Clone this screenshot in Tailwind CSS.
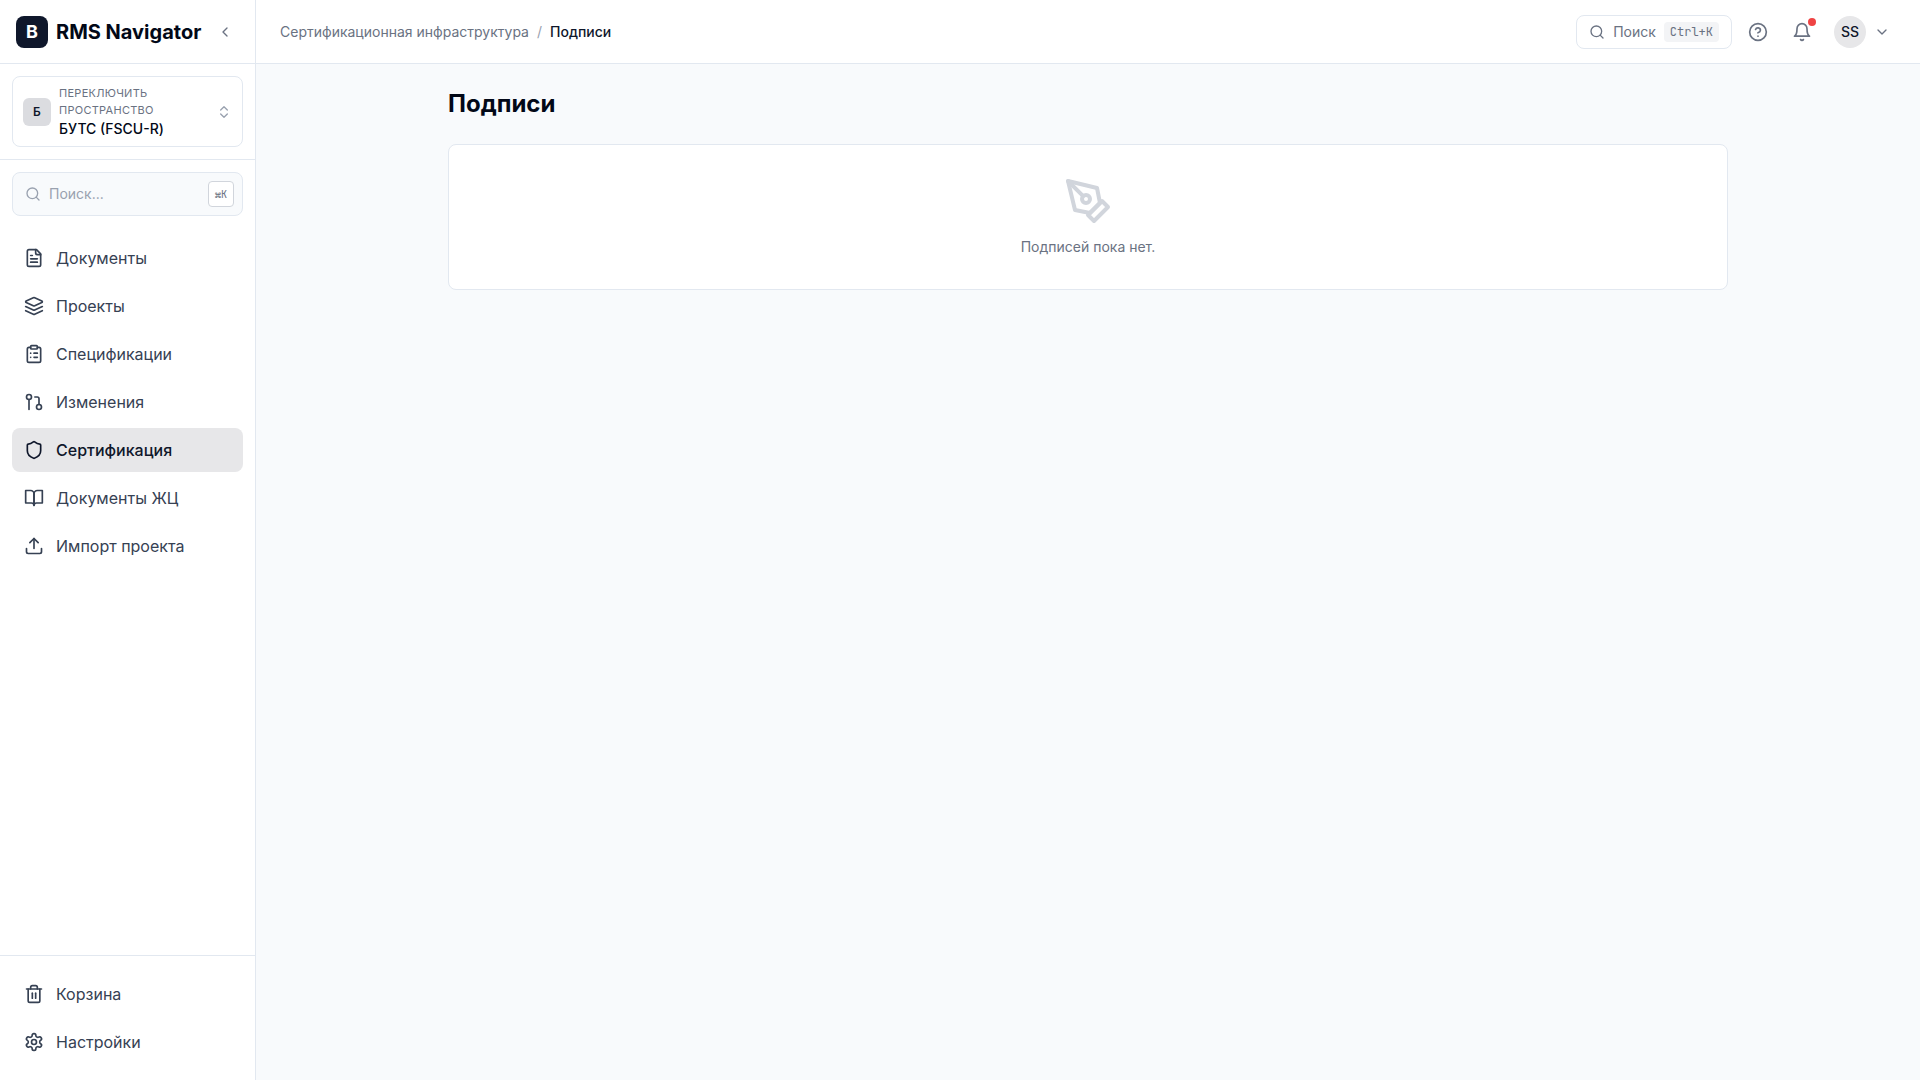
<!DOCTYPE html>
<html lang="ru">
<head>
    <meta charset="UTF-8">
    <meta name="viewport" content="width=device-width, initial-scale=1.0">
    <title>Подписи — RMS Navigator</title>
    <script src="https://cdn.jsdelivr.net/npm/@tailwindcss/browser@4"></script>
</head>
<body class="flex h-screen bg-[#f8fafc] font-['Inter',sans-serif] text-gray-700">

    <!-- Sidebar -->
    <aside class="flex w-64 shrink-0 flex-col border-r border-slate-200 bg-white">
        <div class="flex h-16 shrink-0 items-center justify-between border-b border-slate-200 px-4">
            <a href="#" class="flex items-center gap-2">
                <span class="flex size-8 items-center justify-center rounded-lg bg-slate-900 text-lg font-bold text-white">B</span>
                <span class="text-xl font-bold whitespace-nowrap text-[#020817]">RMS Navigator</span>
            </a>
            <button type="button" aria-label="Свернуть меню" class="rounded-md p-1.5 text-gray-500 hover:bg-gray-100">
                <svg class="size-4" viewBox="0 0 24 24" fill="none" stroke="currentColor" stroke-width="2" stroke-linecap="round" stroke-linejoin="round"><path d="m15 18-6-6 6-6"/></svg>
            </button>
        </div>

        <div class="border-b border-slate-200 p-3">
            <button type="button" class="flex w-full items-center gap-2 rounded-lg border border-slate-200 px-2.5 py-2 text-left hover:bg-gray-50">
                <span class="flex size-7 shrink-0 items-center justify-center rounded-md bg-[#dbdce0] text-xs font-semibold text-slate-900">Б</span>
                <span class="min-w-0 flex-1">
                    <span class="block text-[11px] leading-[17px] tracking-wide text-gray-500 uppercase">Переключить пространство</span>
                    <span class="block truncate text-sm leading-[19px] font-medium text-[#020817]">БУТС (FSCU-R)</span>
                </span>
                <svg class="size-4 shrink-0 text-gray-400" viewBox="0 0 24 24" fill="none" stroke="currentColor" stroke-width="2" stroke-linecap="round" stroke-linejoin="round"><path d="m7 15 5 5 5-5"/><path d="m7 9 5-5 5 5"/></svg>
            </button>
        </div>

        <div class="px-3 pt-3">
            <label class="flex h-11 items-center gap-2 rounded-lg border border-slate-200 bg-[#f8fafc] pr-2 pl-3">
                <svg class="size-4 shrink-0 text-gray-400" viewBox="0 0 24 24" fill="none" stroke="currentColor" stroke-width="2" stroke-linecap="round" stroke-linejoin="round"><circle cx="11" cy="11" r="8"/><path d="m21 21-4.3-4.3"/></svg>
                <input type="text" placeholder="Поиск..." aria-label="Поиск" class="min-w-0 flex-1 bg-transparent text-sm outline-none placeholder:text-gray-400">
                <kbd class="flex size-[26px] shrink-0 items-center justify-center rounded border border-gray-300 bg-white font-['JetBrains_Mono','Liberation_Mono',monospace] text-[10px] text-gray-500">⌘K</kbd>
            </label>
        </div>

        <nav class="flex-1 space-y-1 overflow-y-auto px-3 pt-5">
            <a href="#" class="flex h-11 items-center gap-3 rounded-lg px-3 hover:bg-gray-100">
                <svg class="size-5" viewBox="0 0 24 24" fill="none" stroke="currentColor" stroke-width="2" stroke-linecap="round" stroke-linejoin="round"><path d="M15 2H6a2 2 0 0 0-2 2v16a2 2 0 0 0 2 2h12a2 2 0 0 0 2-2V7Z"/><path d="M14 2v4a2 2 0 0 0 2 2h4"/><path d="M10 9H8"/><path d="M16 13H8"/><path d="M16 17H8"/></svg>
                <span>Документы</span>
            </a>
            <a href="#" class="flex h-11 items-center gap-3 rounded-lg px-3 hover:bg-gray-100">
                <svg class="size-5" viewBox="0 0 24 24" fill="none" stroke="currentColor" stroke-width="2" stroke-linecap="round" stroke-linejoin="round"><path d="m12.83 2.18a2 2 0 0 0-1.66 0L2.6 6.08a1 1 0 0 0 0 1.83l8.58 3.91a2 2 0 0 0 1.66 0l8.58-3.9a1 1 0 0 0 0-1.83Z"/><path d="m22 17.65-9.17 4.16a2 2 0 0 1-1.66 0L2 17.65"/><path d="m22 12.65-9.17 4.16a2 2 0 0 1-1.66 0L2 12.65"/></svg>
                <span>Проекты</span>
            </a>
            <a href="#" class="flex h-11 items-center gap-3 rounded-lg px-3 hover:bg-gray-100">
                <svg class="size-5" viewBox="0 0 24 24" fill="none" stroke="currentColor" stroke-width="2" stroke-linecap="round" stroke-linejoin="round"><rect width="8" height="4" x="8" y="2" rx="1" ry="1"/><path d="M16 4h2a2 2 0 0 1 2 2v14a2 2 0 0 1-2 2H6a2 2 0 0 1-2-2V6a2 2 0 0 1 2-2h2"/><path d="M12 11h4"/><path d="M12 16h4"/><path d="M8 11h.01"/><path d="M8 16h.01"/></svg>
                <span>Спецификации</span>
            </a>
            <a href="#" class="flex h-11 items-center gap-3 rounded-lg px-3 hover:bg-gray-100">
                <svg class="size-5" viewBox="0 0 24 24" fill="none" stroke="currentColor" stroke-width="2" stroke-linecap="round" stroke-linejoin="round"><circle cx="18" cy="18" r="3"/><circle cx="6" cy="6" r="3"/><path d="M13 6h3a2 2 0 0 1 2 2v7"/><path d="M6 9v12"/></svg>
                <span>Изменения</span>
            </a>
            <a href="#" aria-current="page" class="flex h-11 items-center gap-3 rounded-lg bg-[#e7e7e9] px-3 font-medium text-slate-900">
                <svg class="size-5" viewBox="0 0 24 24" fill="none" stroke="currentColor" stroke-width="2" stroke-linecap="round" stroke-linejoin="round"><path d="M20 13c0 5-3.5 7.5-7.66 8.95a1 1 0 0 1-.67-.01C7.5 20.5 4 18 4 13V6a1 1 0 0 1 1-1c2 0 4.5-1.2 6.24-2.72a1.17 1.17 0 0 1 1.52 0C14.51 3.81 17 5 19 5a1 1 0 0 1 1 1z"/></svg>
                <span>Сертификация</span>
            </a>
            <a href="#" class="flex h-11 items-center gap-3 rounded-lg px-3 hover:bg-gray-100">
                <svg class="size-5" viewBox="0 0 24 24" fill="none" stroke="currentColor" stroke-width="2" stroke-linecap="round" stroke-linejoin="round"><path d="M2 3h6a4 4 0 0 1 4 4v14a3 3 0 0 0-3-3H2z"/><path d="M22 3h-6a4 4 0 0 0-4 4v14a3 3 0 0 1 3-3h7z"/></svg>
                <span>Документы ЖЦ</span>
            </a>
            <a href="#" class="flex h-11 items-center gap-3 rounded-lg px-3 hover:bg-gray-100">
                <svg class="size-5" viewBox="0 0 24 24" fill="none" stroke="currentColor" stroke-width="2" stroke-linecap="round" stroke-linejoin="round"><path d="M21 15v4a2 2 0 0 1-2 2H5a2 2 0 0 1-2-2v-4"/><path d="m17 8-5-5-5 5"/><path d="M12 3v12"/></svg>
                <span>Импорт проекта</span>
            </a>
        </nav>

        <div class="space-y-1 border-t border-slate-200 px-3 py-4">
            <a href="#" class="flex h-11 items-center gap-3 rounded-lg px-3 hover:bg-gray-100">
                <svg class="size-5" viewBox="0 0 24 24" fill="none" stroke="currentColor" stroke-width="2" stroke-linecap="round" stroke-linejoin="round"><path d="M3 6h18"/><path d="M19 6v14c0 1-1 2-2 2H7c-1 0-2-1-2-2V6"/><path d="M8 6V4c0-1 1-2 2-2h4c1 0 2 1 2 2v2"/><path d="M10 11v6"/><path d="M14 11v6"/></svg>
                <span>Корзина</span>
            </a>
            <a href="#" class="flex h-11 items-center gap-3 rounded-lg px-3 hover:bg-gray-100">
                <svg class="size-5" viewBox="0 0 24 24" fill="none" stroke="currentColor" stroke-width="2" stroke-linecap="round" stroke-linejoin="round"><path d="M12.22 2h-.44a2 2 0 0 0-2 2v.18a2 2 0 0 1-1 1.73l-.43.25a2 2 0 0 1-2 0l-.15-.08a2 2 0 0 0-2.73.73l-.22.38a2 2 0 0 0 .73 2.73l.15.1a2 2 0 0 1 1 1.72v.51a2 2 0 0 1-1 1.74l-.15.09a2 2 0 0 0-.73 2.73l.22.38a2 2 0 0 0 2.73.73l.15-.08a2 2 0 0 1 2 0l.43.25a2 2 0 0 1 1 1.73V20a2 2 0 0 0 2 2h.44a2 2 0 0 0 2-2v-.18a2 2 0 0 1 1-1.73l.43-.25a2 2 0 0 1 2 0l.15.08a2 2 0 0 0 2.73-.73l.22-.39a2 2 0 0 0-.73-2.73l-.15-.08a2 2 0 0 1-1-1.74v-.5a2 2 0 0 1 1-1.74l.15-.09a2 2 0 0 0 .73-2.73l-.22-.38a2 2 0 0 0-2.73-.73l-.15.08a2 2 0 0 1-2 0l-.43-.25a2 2 0 0 1-1-1.73V4a2 2 0 0 0-2-2z"/><circle cx="12" cy="12" r="3"/></svg>
                <span>Настройки</span>
            </a>
        </div>
    </aside>

    <div class="flex min-w-0 flex-1 flex-col">
        <!-- Top bar -->
        <header class="flex h-16 shrink-0 items-center justify-between border-b border-slate-200 bg-white px-6">
            <nav aria-label="Навигация" class="flex items-center gap-2 text-sm">
                <a href="#" class="text-gray-500 hover:text-gray-700">Сертификационная инфраструктура</a>
                <span class="text-gray-400">/</span>
                <span class="font-medium text-slate-900">Подписи</span>
            </nav>
            <div class="flex items-center gap-2">
                <button type="button" class="flex items-center gap-2 rounded-lg border border-slate-200 px-3 py-1.5 text-sm text-gray-500 hover:bg-gray-50">
                    <svg class="size-4" viewBox="0 0 24 24" fill="none" stroke="currentColor" stroke-width="2" stroke-linecap="round" stroke-linejoin="round"><circle cx="11" cy="11" r="8"/><path d="m21 21-4.3-4.3"/></svg>
                    <span>Поиск</span>
                    <kbd class="rounded bg-gray-100 px-1.5 py-0.5 font-['JetBrains_Mono','Liberation_Mono',monospace] text-xs">Ctrl+K</kbd>
                </button>
                <button type="button" aria-label="Справка" class="rounded-lg p-2 text-gray-500 hover:bg-gray-100">
                    <svg class="size-5" viewBox="0 0 24 24" fill="none" stroke="currentColor" stroke-width="2" stroke-linecap="round" stroke-linejoin="round"><circle cx="12" cy="12" r="10"/><path d="M9.09 9a3 3 0 0 1 5.83 1c0 2-3 3-3 3"/><path d="M12 17h.01"/></svg>
                </button>
                <button type="button" aria-label="Уведомления" class="relative rounded-lg p-2 text-gray-500 hover:bg-gray-100">
                    <svg class="size-5" viewBox="0 0 24 24" fill="none" stroke="currentColor" stroke-width="2" stroke-linecap="round" stroke-linejoin="round"><path d="M6 8a6 6 0 0 1 12 0c0 7 3 9 3 9H3s3-2 3-9"/><path d="M10.3 21a1.94 1.94 0 0 0 3.4 0"/></svg>
                    <span class="absolute top-1 right-1 size-2 rounded-full bg-[#ef4444]"></span>
                </button>
                <button type="button" aria-label="Профиль" class="flex items-center gap-2 rounded-lg px-1.5 text-gray-500 hover:bg-gray-100">
                    <span class="flex size-8 items-center justify-center rounded-full bg-[#e7e7e9] text-sm font-medium text-slate-900">SS</span>
                    <svg class="size-4" viewBox="0 0 24 24" fill="none" stroke="currentColor" stroke-width="2" stroke-linecap="round" stroke-linejoin="round"><path d="m6 9 6 6 6-6"/></svg>
                </button>
            </div>
        </header>

        <main class="flex-1 overflow-y-auto p-6">
            <div class="mx-auto max-w-7xl">
                <h1 class="text-2xl font-bold text-[#020817]">Подписи</h1>
                <div class="mt-6 flex flex-col items-center rounded-lg border border-slate-200 bg-white p-8">
                    <svg class="size-12 text-gray-300" viewBox="0 0 24 24" fill="none" stroke="currentColor" stroke-width="2" stroke-linecap="round" stroke-linejoin="round"><path d="m12 19 7-7 3 3-7 7-3-3z"/><path d="m18 13-1.5-7.5L2 2l3.5 14.5L13 18l5-5z"/><path d="m2 2 7.586 7.586"/><circle cx="11" cy="11" r="2"/></svg>
                    <p class="mt-3 text-sm text-gray-500">Подписей пока нет.</p>
                </div>
            </div>
        </main>
    </div>

</body>
</html>
